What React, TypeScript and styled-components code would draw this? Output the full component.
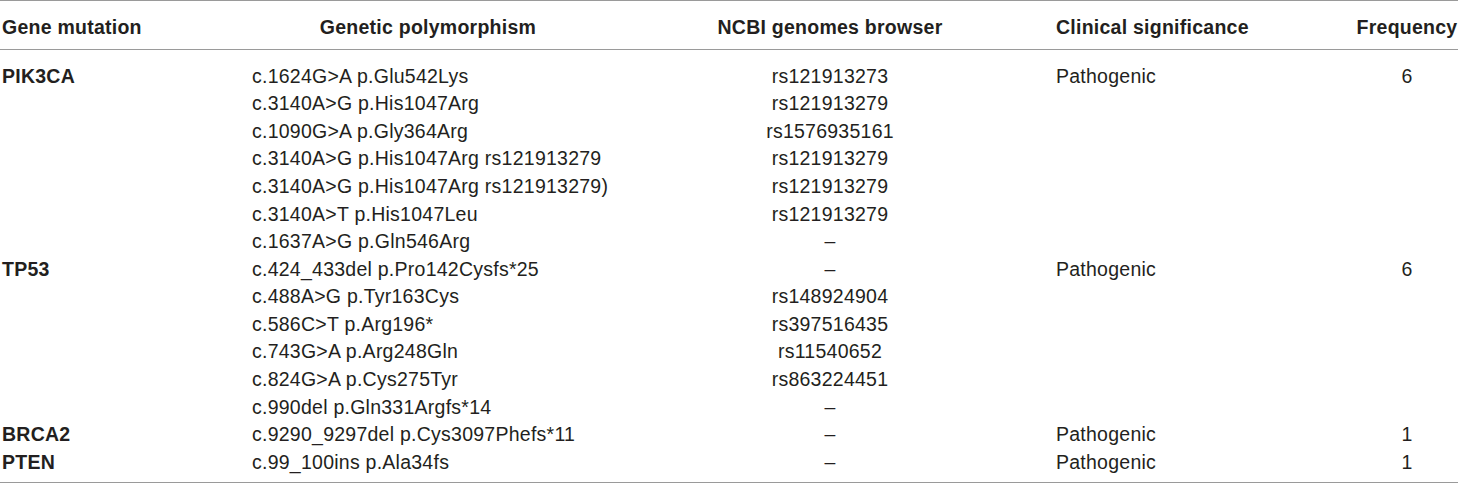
import React from "react";
import styled, { createGlobalStyle } from "styled-components";

const Global = createGlobalStyle`
  html, body { margin: 0; padding: 0; background: #ffffff; }
  body { font-family: "Liberation Sans", Arial, Helvetica, sans-serif; }
`;

const COLS = "252px 352px 452px 300px 102px";

const Table = styled.div`
  width: 1458px;
  border-top: 1px solid #9a9a9a;
  border-bottom: 1px solid #9a9a9a;
  color: #231f20;
  font-size: 19.5px;
  letter-spacing: 0.25px;
`;

const HeadRow = styled.div`
  display: grid;
  grid-template-columns: ${COLS};
  height: 49px;
  align-items: center;
  border-bottom: 1px solid #9a9a9a;
  padding-top: 3px;
  box-sizing: border-box;
`;

const Body = styled.div`
  padding: 12px 0 7px;
`;

const Row = styled.div`
  display: grid;
  grid-template-columns: ${COLS};
  height: 27.57px;
  align-items: center;
`;

const Cell = styled.div<{ $align?: "left" | "center"; $bold?: boolean; $pad?: number }>`
  text-align: ${(p) => p.$align ?? "left"};
  font-weight: ${(p) => (p.$bold ? "bold" : "normal")};
  padding-left: ${(p) => p.$pad ?? 0}px;
  white-space: nowrap;
  line-height: 22px;
`;

type R = [string, string, string, string, string];

const rows: R[] = [
  ["PIK3CA", "c.1624G>A p.Glu542Lys", "rs121913273", "Pathogenic", "6"],
  ["", "c.3140A>G p.His1047Arg", "rs121913279", "", ""],
  ["", "c.1090G>A p.Gly364Arg", "rs1576935161", "", ""],
  ["", "c.3140A>G p.His1047Arg rs121913279", "rs121913279", "", ""],
  ["", "c.3140A>G p.His1047Arg rs121913279)", "rs121913279", "", ""],
  ["", "c.3140A>T p.His1047Leu", "rs121913279", "", ""],
  ["", "c.1637A>G p.Gln546Arg", "–", "", ""],
  ["TP53", "c.424_433del p.Pro142Cysfs*25", "–", "Pathogenic", "6"],
  ["", "c.488A>G p.Tyr163Cys", "rs148924904", "", ""],
  ["", "c.586C>T p.Arg196*", "rs397516435", "", ""],
  ["", "c.743G>A p.Arg248Gln", "rs11540652", "", ""],
  ["", "c.824G>A p.Cys275Tyr", "rs863224451", "", ""],
  ["", "c.990del p.Gln331Argfs*14", "–", "", ""],
  ["BRCA2", "c.9290_9297del p.Cys3097Phefs*11", "–", "Pathogenic", "1"],
  ["PTEN", "c.99_100ins p.Ala34fs", "–", "Pathogenic", "1"],
];

export default function App() {
  return (
    <>
      <Global />
      <Table>
        <HeadRow>
          <Cell $bold $pad={2}>Gene mutation</Cell>
          <Cell $bold $align="center">Genetic polymorphism</Cell>
          <Cell $bold $align="center">NCBI genomes browser</Cell>
          <Cell $bold>Clinical significance</Cell>
          <Cell $bold $align="center">Frequency</Cell>
        </HeadRow>
        <Body>
          {rows.map((r, i) => (
            <Row key={i}>
              <Cell $bold $pad={2}>{r[0]}</Cell>
              <Cell>{r[1]}</Cell>
              <Cell $align="center">{r[2]}</Cell>
              <Cell>{r[3]}</Cell>
              <Cell $align="center">{r[4]}</Cell>
            </Row>
          ))}
        </Body>
      </Table>
    </>
  );
}
